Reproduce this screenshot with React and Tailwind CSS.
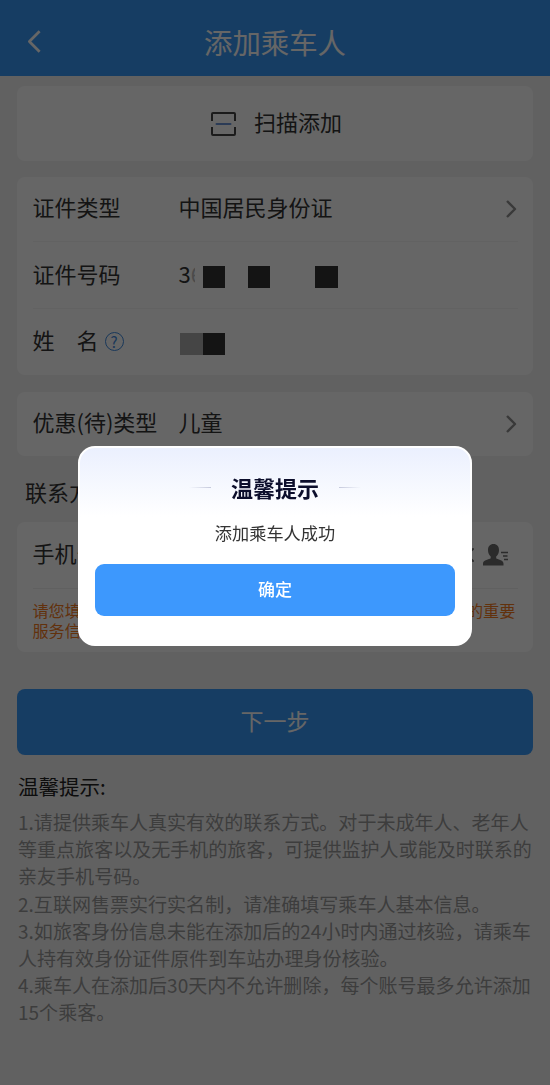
import { ChevronLeft, ChevronRight, X } from 'lucide-react';

const TIPS = [
  '1.请提供乘车人真实有效的联系方式。对于未成年人、老年人',
  '等重点旅客以及无手机的旅客，可提供监护人或能及时联系的',
  '亲友手机号码。',
  '2.互联网售票实行实名制，请准确填写乘车人基本信息。',
  '3.如旅客身份信息未能在添加后的24小时内通过核验，请乘车',
  '人持有效身份证件原件到车站办理身份核验。',
  '4.乘车人在添加后30天内不允许删除，每个账号最多允许添加',
  '15个乘客。',
];

function ScanIcon() {
  return (
    <svg width="25" height="24" viewBox="0 0 25 24" fill="none" strokeWidth="2">
      <path d="M1 9V2Q1 1 2 1H23Q24 1 24 2V9M1 15V22Q1 23 2 23H23Q24 23 24 22V15" stroke="#444444" />
      <path d="M5.500 12H19.500" stroke="#6b95d8" strokeLinecap="round" />
    </svg>
  );
}

function ContactIcon() {
  return (
    <svg width="26" height="22" viewBox="0 0 26 22" fill="#6c6c6c">
      <path d="M10.500 0C7 0 5 2.500 5 6c0 2.800 1 5 2.700 6.400v1.800C6.500 15.500 0 15.800 0 19.500V21.500H20.500V19.500C20.500 15.800 14.200 15.500 13.200 14.200V12.400C15 11 16 8.800 16 6c0-3.500-2-6-5.500-6z" />
      <path d="M18 8.500H25M20 12H24.500M21 15.500H25" stroke="#6c6c6c" strokeWidth="1.300" />
    </svg>
  );
}

function Row({ label, children, className = '' }) {
  return (
    <div className={`flex items-center ${className}`}>
      <div className="w-[146px] shrink-0 flex items-center whitespace-nowrap pb-[5px]">{label}</div>
      {children}
    </div>
  );
}

function Arrow() {
  return <ChevronRight className="ml-auto -mr-[9px] text-[#909090]" size={32} strokeWidth={1.8} strokeLinecap="butt" />;
}

function SuccessDialog() {
  return (
    <div className="fixed inset-0 z-10 flex items-start justify-center bg-black/60 pt-[446px]">
      <div className="w-[394px] h-[200px] rounded-[17px] bg-white bg-linear-to-b from-[#ebf0fe] to-white to-35% border-2 border-white px-[15px] text-center">
        <div className="mt-[23px] flex h-[33px] items-center justify-center gap-[20px]">
          <span className="h-px w-[22px] bg-linear-to-r from-transparent to-[#c5c9dc]" />
          <h2 className="text-[22px] font-bold leading-[33px] text-[#0c0e2c]">温馨提示</h2>
          <span className="h-px w-[22px] bg-linear-to-l from-transparent to-[#c5c9dc]" />
        </div>
        <p className="mt-4 text-[17.200px] leading-[26px] text-[#333333]">添加乘车人成功</p>
        <button className="mt-[18px] h-[52px] w-full rounded-[9px] bg-[#3d98fd] pb-[2px] text-[17px] font-medium text-white">
          确定
        </button>
      </div>
    </div>
  );
}

export default function App() {
  return (
    <div className="h-[1085px] overflow-hidden bg-[#f3f3f3] text-[22px] text-[#333333] font-['Noto_Sans_CJK_SC',sans-serif]">
      <header className="grid h-[76px] grid-cols-[80px_1fr_80px] items-center bg-[#3798f8] pt-[7px] text-white">
        <ChevronLeft className="ml-[14px]" size={41} strokeWidth={1.6} strokeLinecap="butt" />
        <h1 className="text-center text-[28.400px] leading-10">添加乘车人</h1>
      </header>

      <main className="px-[17px] pt-[10px]">
        <section className="flex h-[75px] items-center justify-center gap-[18px] rounded-lg bg-white pl-[3px]">
          <ScanIcon />
          <span className="pb-[4px]">扫描添加</span>
        </section>

        <section className="mt-4 h-[198px] rounded-lg bg-white px-[15.500px]">
          <Row label="证件类型" className="h-[65px] border-b border-[#f5f5f5]">
            <span className="pb-[5px]">中国居民身份证</span>
            <Arrow />
          </Row>
          <Row label="证件号码" className="h-[67px] border-b border-[#f5f5f5] pt-px">
            <div className="flex w-[24px] pb-[5px]">
              <span>3</span>
              <span className="w-[4px] overflow-hidden text-[#bbbbbb]">6</span>
            </div>
            <div className="flex pt-[3px]">
              <span className="size-[22.500px] bg-[#333333]" />
              <span className="ml-[22.500px] size-[22.500px] bg-[#333333]" />
              <span className="ml-[45px] size-[22.500px] bg-[#333333]" />
            </div>
          </Row>
          <Row
            className="h-[66px]"
            label={
              <>
                <span>姓</span>
                <span className="ml-[22px]">名</span>
                <span className="ml-[6px] mt-[3px] flex size-[19px] items-center justify-center rounded-full border-[1.500px] border-[#3f8be0] text-[15px] leading-none text-[#3f8be0]">?</span>
              </>
            }
          >
            <div className="ml-[1.500px] mt-[4px] flex">
              <span className="size-[22.500px] bg-[#adadad]" />
              <span className="size-[22.500px] bg-[#333333]" />
            </div>
          </Row>
        </section>

        <section className="mt-[17px] rounded-lg bg-white px-[15.500px]">
          <Row label="优惠(待)类型" className="h-16">
            <span className="pb-[5px]">儿童</span>
            <Arrow />
          </Row>
        </section>

        <h3 className="flex h-[66px] items-center pl-2 pt-[4px]">联系方式</h3>

        <section className="h-[130px] rounded-lg bg-white px-[15.500px]">
          <Row label="手机号码" className="h-[67px] border-b border-[#f0f0f0]">
            <X className="ml-auto mr-[4px] text-[#6c6c6c]" size={24} strokeWidth={2} />
            <div className="mr-[8.500px]">
              <ContactIcon />
            </div>
          </Row>
          <p className="mt-[11px] text-[16.100px] leading-5 text-[#f57c1f]">
            请您填写乘车人真实有效的联系方式，以便接收铁路部门推送的重要服务信息。
          </p>
        </section>

        <button className="mt-[37px] h-[66px] w-full rounded-lg bg-[#3798f8] pb-[4px] text-[23px] text-white">下一步</button>

        <div className="mt-[15px] pl-px text-[20.500px] leading-8 text-[#222222]">温馨提示:</div>
        <div className="mt-[6px] pl-px text-[19.050px] leading-[27.200px] text-[#999999]">
          {TIPS.map((line) => (
            <p key={line} className="whitespace-nowrap">{line}</p>
          ))}
        </div>
      </main>

      <SuccessDialog />
    </div>
  );
}
